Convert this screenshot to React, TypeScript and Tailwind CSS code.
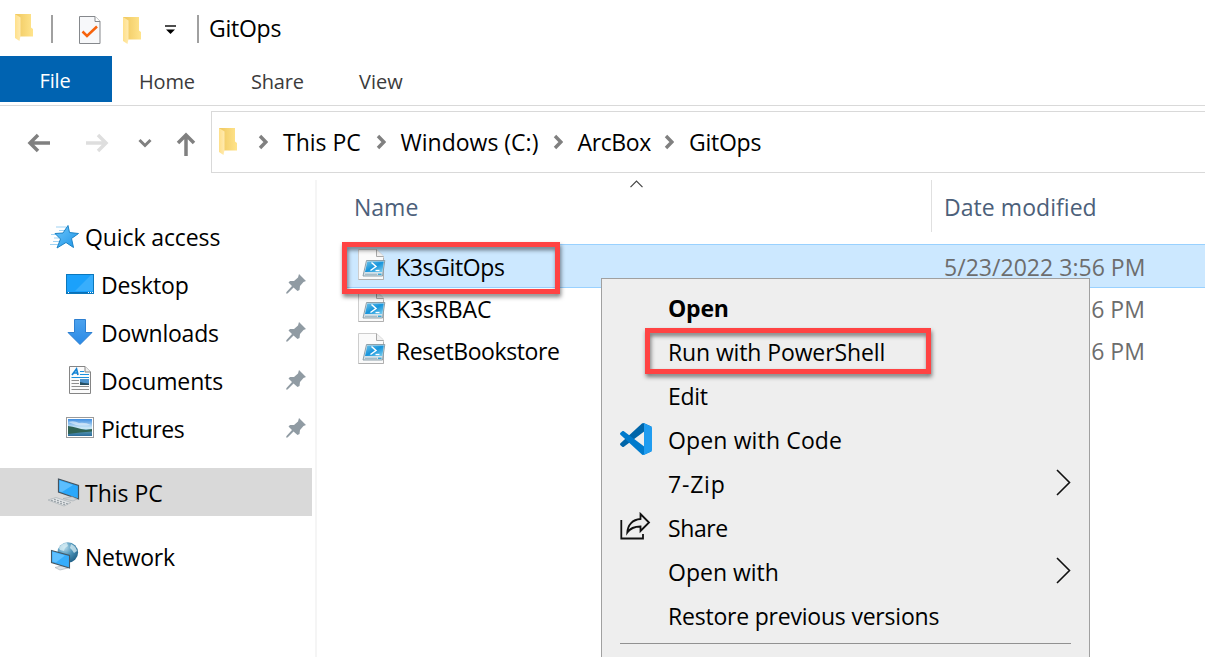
import type { ReactNode } from "react";

function Folder() {
  return (
    <svg width="20" height="30" viewBox="0 0 20 30" className="block shrink-0">
      <defs>
        <linearGradient id="fb" x1="0" x2="1"><stop offset="0" stopColor="#efc75e" /><stop offset="1" stopColor="#ffe48c" /></linearGradient>
        <linearGradient id="ff" x1="0" x2="1"><stop offset="0" stopColor="#ffe08a" /><stop offset="1" stopColor="#ffeab0" /></linearGradient>
      </defs>
      <path d="M1 1H17V14.5L19 16V23.500H1Z" fill="url(#fb)" />
      <path d="M1 1L6.500 4.500V23L5.500 28L1 25Z" fill="url(#ff)" />
    </svg>
  );
}

function CheckDoc() {
  return (
    <svg width="22" height="30" viewBox="0 0 22 30" className="block shrink-0">
      <path d="M.5 1.500H16L21 6.500V28.500H.5Z" fill="#f7f8fa" stroke="#85888c" />
      <path d="M16 1.500V6.500H21" fill="#fff" stroke="#85888c" />
      <path d="M3.500 16.500L8 21L18 11.500" fill="none" stroke="#f7630c" strokeWidth="2.500" />
    </svg>
  );
}

function Crumb() {
  return (
    <svg width="10" height="16" viewBox="0 0 10 16" className="mr-[15px] block shrink-0">
      <path d="M2 2L7.800 8L2 14" fill="none" stroke="#808080" strokeWidth="3.400" />
    </svg>
  );
}

function Pin() {
  return (
    <svg width="22" height="22" viewBox="0 0 22 22" className="block shrink-0">
      <path d="M14 1L21 8L18.500 9L15 13L14.500 17L12.500 18L8.500 14.500L2.500 20.500L1 20.500L1.500 19L7 13L3.500 9.500L5 8H9L13 4.500Z" fill="#909ba3" />
    </svg>
  );
}

function Star() {
  return (
    <svg width="30" height="26" viewBox="0 0 30 26" className="mt-0.5 block">
      <defs><linearGradient id="st" x1="0" y1="0" x2="1" y2="1"><stop offset="0" stopColor="#6cc5fa" /><stop offset="1" stopColor="#1d95e8" /></linearGradient></defs>
      <path d="M6 3H16M9 6.500H15M1 10.500H8M4 14H9M3 17.500H9M0 20.500H8" stroke="#9fd2f3" strokeWidth="1" />
      <path d="M18 1.500L19.500 8.500L28.500 9.500L21.500 14.500L23.500 23.500L16 18.500L7 24L10.500 15L5 9.500L13 9Z" fill="url(#st)" stroke="#1c83c6" strokeWidth="1" />
    </svg>
  );
}

function DesktopIcon() {
  return (
    <svg width="28" height="20" viewBox="0 0 28 20" className="block">
      <rect x=".5" y=".5" width="27" height="19" fill="#1ba1fb" stroke="#0b78bd" />
      <path d="M9 17L25 1H27V17Z" fill="#38aefc" />
      <path d="M1 18.500H27" stroke="#0a6fb8" />
      <path d="M2 18.500H3M22 18.500H23M24 18.500H25M26 18.500H27" stroke="#fff" />
    </svg>
  );
}

function DownIcon() {
  return (
    <svg width="28" height="26" viewBox="0 0 28 26" className="block">
      <defs><linearGradient id="dn" x1="0" y1="0" x2="0" y2="1"><stop offset="0" stopColor="#4ba2ee" /><stop offset="1" stopColor="#2a8ae6" /></linearGradient></defs>
      <path d="M8.500.5H19.500V13.500H26L14 25.500L2 13.500H8.500Z" fill="url(#dn)" stroke="#2d7fd0" />
    </svg>
  );
}

function DocIcon() {
  return (
    <svg width="28" height="28" viewBox="0 0 28 28" className="block">
      <path d="M3.500.5H19L24.500 6V27.500H3.500Z" fill="#fbfbfb" stroke="#858585" />
      <path d="M19 .5V6H24.500" fill="#eee" stroke="#858585" />
      <path d="M6 9L10.500 3L12 9M7.500 7H11.500" fill="none" stroke="#1583d3" strokeWidth="1.700" />
      <path d="M14 5.500H18M14 8.500H23M5.500 11.500H23" stroke="#1c90dd" strokeWidth="1.200" />
      <path d="M5.500 14.500H13M5.500 17.500H13M5.500 20.500H23M5.500 23.500H23" stroke="#8f8f8f" />
      <rect x="14" y="13" width="9" height="6" fill="#4f94cd" />
      <path d="M14 16L18 17L23 17.500V19H14Z" fill="#254e62" />
    </svg>
  );
}

function PicIcon() {
  return (
    <svg width="28" height="22" viewBox="0 0 28 22" className="block">
      <defs><linearGradient id="pc" x1="0" y1="0" x2="0" y2="1"><stop offset="0" stopColor="#3f8de0" /><stop offset="0.550" stopColor="#d4edf9" /><stop offset="0.650" stopColor="#5f9fb5" /><stop offset="1" stopColor="#2b6c9c" /></linearGradient></defs>
      <rect x=".5" y=".5" width="27" height="20" fill="#fff" stroke="#9a9a9a" />
      <rect x="2" y="2" width="24" height="17" fill="url(#pc)" />
      <path d="M2 9C8 9.500 13 12 20 13L26 12V14.500L14 15.500L2 17Z" fill="#2f6253" />
      <path d="M2 5Q8 3 13 6Q19 5 25 8Q16 9 10 8Z" fill="#fff" opacity=".5" />
    </svg>
  );
}

function PcIcon() {
  return (
    <svg width="32" height="30" viewBox="0 0 32 30" className="block">
      <path d="M10.500 1L30.500 7.500V21L10.500 14Z" fill="#2ba8fb" stroke="#46545f" strokeWidth="1.200" />
      <path d="M11.500 2.500L25 7L14 14L11.500 13.500Z" fill="#5cbefe" />
      <path d="M15 20.500L24 18.800L29 21L25 23Z" fill="#cfd3d6" stroke="#a3abb0" strokeWidth=".6" />
      <path d="M0 22L8 19.500L23 24.500L16 28Z" fill="#dfe2e4" stroke="#a3abb0" strokeWidth=".6" />
      <path d="M3 22.200L17.500 27M6 21.200L20 26" stroke="#8f989e" strokeWidth="1" strokeDasharray="2 1.200" />
    </svg>
  );
}

function NetIcon() {
  return (
    <svg width="30" height="30" viewBox="0 0 30 30" className="block">
      <defs><radialGradient id="gl" cx=".35" cy=".25" r=".8"><stop offset="0" stopColor="#b9dcec" /><stop offset=".5" stopColor="#4c93b8" /><stop offset="1" stopColor="#1e5f86" /></radialGradient></defs>
      <circle cx="17.800" cy="10.500" r="10.300" fill="url(#gl)" />
      <path d="M9 6Q12 1 17 1L18 4L15 6L14 9L10 8ZM21 2Q26 4 27 9L24 11L22 8L20 6Z" fill="#d8edf4" opacity=".75" />
      <path d="M5 25.500L13 23.500L18 26L10 28Z" fill="#dfe3e6" stroke="#a5adb3" strokeWidth=".6" />
      <path d="M1.500 8.500L19.500 13.500V26L1.500 20.500Z" fill="#36adfb" stroke="#465864" strokeWidth="1.100" />
      <path d="M2.500 9.800L15 13.500L6 20.500L2.500 19.500Z" fill="#5fc0ff" />
    </svg>
  );
}

function Ps1Icon() {
  return (
    <svg width="28" height="32" viewBox="0 0 28 32" className="block shrink-0">
      <defs><linearGradient id="ps" x1="0" y1="0" x2="1" y2="1"><stop offset="0" stopColor="#6cc0e6" /><stop offset=".5" stopColor="#1795dc" /><stop offset="1" stopColor="#7fd0ef" /></linearGradient></defs>
      <path d="M.5.500H18.500L25.500 7V30.500H.5Z" fill="#fafafa" stroke="#cdcdcd" />
      <path d="M18.500.5V7.500H25.500" fill="#f0f0f0" stroke="#a8a8a8" />
      <path d="M.5 30.500H25.500V9" fill="none" stroke="#b0b0b0" />
      <path d="M8.500 11.500H26.800L24.500 27H5Z" fill="#d3e2ea" stroke="#8597a1" strokeWidth=".9" />
      <path d="M9.300 12.500H25.800L24.300 23H7Z" fill="url(#ps)" />
      <path d="M13.500 13.500L18 17.500L12.500 21.500" fill="none" stroke="#fff" strokeWidth="1.500" />
      <path d="M17.500 21.500H21.500" stroke="#fff" strokeWidth="1.300" />
      <path d="M7 25.300H19" stroke="#9cb3bf" strokeWidth="1" />
      <path d="M20 25.300H23.500" stroke="#3aa8d8" strokeWidth="1.400" />
    </svg>
  );
}

function VsCode() {
  return (
    <svg width="32" height="32" viewBox="0 0 100 100" className="block">
      <path d="M96 10.500L75.500.600C73 -.5 70.500 0 68.500 1.800L1.500 63C-.4 64.600-.4 67.500 1.500 69.200L7 74.200C8.400 75.500 10.600 75.600 12.200 74.400L93.200 13C96 11 100 13 100 16.300V16C100 13.600 98.500 11.500 96 10.500Z" fill="#0065a9" />
      <path d="M96 89.500L75.500 99.400C73 100.500 70.500 100 68.500 98.200L1.500 37C-.4 35.400-.4 32.500 1.500 30.800L7 25.800C8.400 24.500 10.600 24.400 12.200 25.600L93.200 87C96 89 100 87 100 83.700V84C100 86.400 98.500 88.500 96 89.500Z" fill="#007acc" />
      <path d="M75.500 99.400C73 100.500 70.500 100 68.700 98.200C71 100.500 75 98.900 75 95.600V4.400C75 1.100 71 -.5 68.700 1.800C70.500 0 73 -.5 75.500.600L96 10.500C98.500 11.500 100 13.600 100 16V84C100 86.400 98.500 88.500 96 89.500Z" fill="#1f9cf0" />
    </svg>
  );
}

function ShareIcon() {
  return (
    <svg width="32" height="30" viewBox="0 0 32 30" className="block">
      <path d="M1.300 8V26.500H23V22" fill="none" stroke="#111" strokeWidth="1.800" />
      <path d="M20.500 2L29 10.500L20.500 19V14.500C13.500 14.500 10 16.500 7.300 20.500C7.800 13 12.500 7.500 20.500 7Z" fill="none" stroke="#111" strokeWidth="1.800" />
    </svg>
  );
}

function Chevron() {
  return (
    <svg width="16" height="28" viewBox="0 0 16 28" className="block">
      <path d="M2 1L14.500 13.500L2 26" fill="none" stroke="#111" strokeWidth="1.600" />
    </svg>
  );
}

const nav: { icon: ReactNode; label: string; cls: string }[] = [
  { icon: <DesktopIcon />, label: "Desktop", cls: "tracking-[-0.15px]" },
  { icon: <DownIcon />, label: "Downloads", cls: "tracking-[-0.25px]" },
  { icon: <DocIcon />, label: "Documents", cls: "tracking-[-0.12px]" },
  { icon: <PicIcon />, label: "Pictures", cls: "tracking-[-0.35px]" },
];

const files = [
  { name: "K3sGitOps", cls: "tracking-[-0.35px]" },
  { name: "K3sRBAC", cls: "tracking-[-0.15px]" },
  { name: "ResetBookstore", cls: "tracking-[-0.4px]" },
];

const menu: { label: string; cls: string; icon?: ReactNode; sub?: boolean }[] = [
  { label: "Open", cls: "font-bold tracking-[-0.2px]" },
  { label: "Run with PowerShell", cls: "tracking-[-0.12px]" },
  { label: "Edit", cls: "tracking-[-0.3px]" },
  { label: "Open with Code", cls: "tracking-[0.14px]", icon: <VsCode /> },
  { label: "7-Zip", cls: "tracking-[0.8px]", sub: true },
  { label: "Share", cls: "tracking-[-0.4px]", icon: <ShareIcon /> },
  { label: "Open with", cls: "", sub: true },
  { label: "Restore previous versions", cls: "tracking-[-0.21px]" },
];

export default function App() {
  return (
    <div className="relative flex h-[657px] w-[1205px] flex-col overflow-hidden bg-white font-['Open_Sans',sans-serif] text-[23px] leading-[30px] whitespace-nowrap text-black">
      <header className="flex h-14 shrink-0 items-center pl-3.5">
        <Folder />
        <i className="mt-0.5 ml-[17px] h-7 w-0.5 bg-[#a0a0a0]" />
        <div className="ml-[26px] pt-1"><CheckDoc /></div>
        <div className="ml-[21px] pt-1.5"><Folder /></div>
        <svg width="12" height="10" viewBox="0 0 12 10" className="mt-1 ml-[23px]">
          <path d="M0 1H11" stroke="#000" strokeWidth="1.400" />
          <path d="M1 4.500H10L5.500 9Z" />
        </svg>
        <i className="mt-0.5 ml-5 h-7 w-0.5 bg-[#a0a0a0]" />
        <span className="ml-2.5 tracking-[-0.25px]">GitOps</span>
      </header>
      <nav className="flex h-[46px] shrink-0 items-center text-[20px] text-[#3b3b3b]">
        <div className="flex h-full w-28 items-center justify-center bg-[#0063b1] pt-1 pr-0.5 text-white"><span className="tracking-[-0.2px]">File</span></div>
        <div className="w-28 pt-1.5 pl-[27px] tracking-[-0.2px]">Home</div>
        <div className="w-[108px] pt-1.5 pl-[27px] tracking-[-0.2px]">Share</div>
        <div className="pt-1.5 pl-[27px]">View</div>
      </nav>
      <div className="mt-[3px] h-px shrink-0 bg-[#d9d9d9]" />
      <div className="mt-[5px] flex h-[62px] shrink-0 items-stretch">
        <svg width="211" height="62" viewBox="0 111 211 62" fill="none" strokeWidth="3.500" stroke="#808080">
          <path d="M50 143H30M38 135L30 143L38 151" />
          <path d="M86 143H106M98 135L106 143L98 151" stroke="#dedede" />
          <path d="M139.500 140L145 145.500L150.500 140" strokeWidth="3" />
          <path d="M186 156V135M178 143L186 135L194 143" />
        </svg>
        <div className="flex flex-1 items-center border border-r-0 border-[#d9d9d9]">
          <div className="mr-5 ml-1.5"><Folder /></div>
          <Crumb /><span className="w-[92.500px]">This PC</span>
          <Crumb /><span className="w-[152px]">Windows (C:)</span>
          <Crumb /><span className="w-[86.500px] tracking-[-0.4px]">ArcBox</span>
          <Crumb /><span className="tracking-[-0.25px]">GitOps</span>
        </div>
      </div>
      <div className="flex flex-1 pt-[7px]">
        <aside className="flex w-[317px] shrink-0 flex-col border-r-2 border-[#f5f5f5] pt-8">
          <div className="flex h-12 items-center pl-[50px]"><Star /><span className="mt-0.5 ml-[5px] tracking-[-0.1px]">Quick access</span></div>
          {nav.map((n) => (
            <div key={n.label} className="flex h-12 items-center pl-[66px]">
              {n.icon}<span className={`mt-0.5 ml-[7px] ${n.cls}`}>{n.label}</span>
              <div className="mr-2 ml-auto"><Pin /></div>
            </div>
          ))}
          <div className="mt-4 flex h-12 w-[312px] items-center bg-[#d9d9d9] pt-0.5 pl-12"><PcIcon /><span className="ml-[5px]">This PC</span></div>
          <div className="mt-4 flex h-12 items-center pt-0.5 pl-[50px]"><NetIcon /><span className="ml-[5px] tracking-[-0.25px]">Network</span></div>
        </aside>
        <main className="flex-1">
          <div className="relative flex h-[52px] text-[#4c607a]">
            <svg width="14" height="8" viewBox="0 0 14 8" className="absolute top-0 left-[313px]"><path d="M.5 7.200L6.500 1.200L12.500 7.200" fill="none" stroke="#444" strokeWidth="1.200" /></svg>
            <div className="w-[615px] border-r border-[#e0e0e0] pt-3 pl-[37px]">Name</div>
            <div className="pt-3 pl-3 tracking-[0.05px]">Date modified</div>
          </div>
          <div className="mt-3">
            {files.map((f, i) => (
              <div key={f.name} className={i === 0 ? "ml-[30px] flex h-11 items-center border-y border-[#99d1ff] bg-[#cce8ff]" : "ml-[30px] flex h-[42px] items-center"}>
                <div className={i === 0 ? "ml-[11px] w-[38px] pb-0.5" : "ml-[11px] w-[38px] pb-1"}><Ps1Icon /></div>
                <div className={i === 0 ? "w-[548px] pt-0.5" : "w-[548px]"}><span className={f.cls}>{f.name}</span></div>
                <span className={i === 0 ? "pt-0.5 tracking-[0.03px] text-[#6d6d6d]" : "text-[#6d6d6d]"}>5/23/2022 3:56 PM</span>
              </div>
            ))}
          </div>
        </main>
      </div>
      <div className="absolute top-[278px] left-[601px] h-[400px] w-[489px] border border-[#a0a0a0] bg-[#eee] pt-1.5">
        {menu.map((it) => (
          <div key={it.label} className="flex h-11 items-center pr-[18px] pl-[18px]">
            <div className="w-12">{it.icon}</div>
            <span className={`pt-0.5 ${it.cls}`}>{it.label}</span>
            {it.sub && <div className="ml-auto"><Chevron /></div>}
          </div>
        ))}
        <div className="mx-[18px] mt-1.5 h-px bg-[#919191]" />
      </div>
      <div className="absolute top-[242px] left-[342px] h-[52px] w-[218px] border-5 border-[#ff4343] drop-shadow-[1px_3px_2px_rgba(0,0,0,0.5)]" />
      <div className="absolute top-[328px] left-[645px] h-[46px] w-[286px] border-5 border-[#ff4343] drop-shadow-[1px_3px_2px_rgba(0,0,0,0.5)]" />
    </div>
  );
}
